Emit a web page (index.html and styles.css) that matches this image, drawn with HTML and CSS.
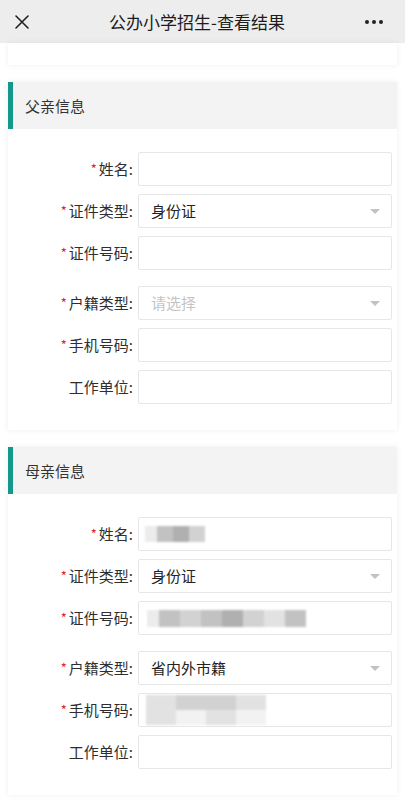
FILE: index.html
```html
<!DOCTYPE html>
<html lang="zh-CN">
<head>
<meta charset="utf-8">
<title>公办小学招生-查看结果</title>
<link rel="stylesheet" href="styles.css">
</head>
<body>
<header class="nav">
  <span class="nav-close">
    <svg width="14" height="14" viewBox="0 0 14 14"><path d="M1 1L13 13M13 1L1 13" stroke="#222" stroke-width="1.6" fill="none" stroke-linecap="round"/></svg>
  </span>
  <h1 class="nav-title">公办小学招生-查看结果</h1>
  <span class="nav-more"><i></i><i></i><i></i></span>
</header>
<main class="page">
  <div class="card card-top"></div>

  <section class="card">
    <div class="card-head">父亲信息</div>
    <div class="form">
      <div class="row"><label class="lbl"><em>*</em>姓名:</label><div class="field"></div></div>
      <div class="row"><label class="lbl"><em>*</em>证件类型:</label><div class="field select">身份证<b class="caret"></b></div></div>
      <div class="row row-wide"><label class="lbl"><em>*</em>证件号码:</label><div class="field"></div></div>
      <div class="row"><label class="lbl"><em>*</em>户籍类型:</label><div class="field select placeholder">请选择<b class="caret"></b></div></div>
      <div class="row"><label class="lbl"><em>*</em>手机号码:</label><div class="field"></div></div>
      <div class="row"><label class="lbl">工作单位:</label><div class="field"></div></div>
    </div>
  </section>

  <section class="card">
    <div class="card-head">母亲信息</div>
    <div class="form">
      <div class="row"><label class="lbl"><em>*</em>姓名:</label><div class="field"><span class="blur blur-name"><i class="g1"></i><i class="g3"></i><i class="g4"></i><i class="g2"></i></span></div></div>
      <div class="row"><label class="lbl"><em>*</em>证件类型:</label><div class="field select">身份证<b class="caret"></b></div></div>
      <div class="row row-wide"><label class="lbl"><em>*</em>证件号码:</label><div class="field"><span class="blur blur-id"><i class="g1"></i><i class="g3"></i><i class="g2"></i><i class="g3"></i><i class="g4"></i><i class="g2"></i><i class="g1"></i><i class="g3"></i></span></div></div>
      <div class="row"><label class="lbl"><em>*</em>户籍类型:</label><div class="field select">省内外市籍<b class="caret"></b></div></div>
      <div class="row"><label class="lbl"><em>*</em>手机号码:</label><div class="field"><span class="blur blur-phone"><span class="bl-row"><i class="g1"></i><i class="g2"></i><i class="g2"></i><i class="g1"></i></span><span class="bl-row"><i class="g1"></i><i class="g0"></i><i class="g1"></i><i class="g0"></i></span></span></div></div>
      <div class="row"><label class="lbl">工作单位:</label><div class="field"></div></div>
    </div>
  </section>
</main>
</body>
</html>
```

FILE: styles.css
```css
html, body {
  margin: 0;
  padding: 0;
  background: #ffffff;
  font-family: "Noto Sans CJK SC", "Noto Sans", sans-serif;
  color: #333;
}

.nav {
  height: 43px;
  background: #ededed;
  display: flex;
  align-items: center;
  justify-content: space-between;
  padding: 0 22px 0 15px;
}
.nav-close {
  display: flex;
  width: 14px;
  height: 14px;
}
.nav-title {
  margin: 0;
  font-size: 17px;
  font-weight: 400;
  color: #1c1c1c;
  line-height: 43px;
}
.nav-more {
  display: flex;
  gap: 3px;
  width: 18px;
}
.nav-more i {
  width: 4px;
  height: 4px;
  border-radius: 50%;
  background: #222;
}

.page {
  padding: 0 8px 20px;
}

.card {
  background: #fff;
  box-shadow: 0 0 6px rgba(0, 0, 0, 0.07);
  margin-top: 17px;
}
.card-top {
  margin-top: 0;
  height: 22px;
}

.card-head {
  height: 47px;
  line-height: 47px;
  background: #f3f3f3;
  border-left: 5px solid #14988a;
  padding-left: 12px;
  font-size: 15px;
  color: #333;
}

.form {
  padding: 23px 5px 26px 0;
}
.row {
  display: grid;
  grid-template-columns: 125px 1fr;
  column-gap: 5px;
  height: 34px;
  margin-bottom: 8px;
}
.row:last-child {
  margin-bottom: 0;
}
.row-wide {
  margin-bottom: 16px;
}
.lbl {
  text-align: right;
  font-size: 15px;
  line-height: 34px;
  color: #2e2e2e;
  white-space: nowrap;
}
.lbl em {
  font-style: normal;
  color: #e0262e;
  font-size: 13px;
  margin-right: 2px;
  vertical-align: 1px;
}
.field {
  position: relative;
  border: 1px solid #e6e6e6;
  border-radius: 2px;
  box-sizing: border-box;
  height: 34px;
  padding-left: 12px;
  font-size: 15px;
  line-height: 32px;
  color: #222;
  display: flex;
  align-items: center;
}
.field.placeholder {
  color: #c4c4c4;
}
.caret {
  position: absolute;
  right: 11px;
  top: 14px;
  width: 0;
  height: 0;
  border-left: 5px solid transparent;
  border-right: 5px solid transparent;
  border-top: 5px solid #c2c2c2;
}

.blur {
  display: flex;
  filter: blur(1.2px);
}
.blur i {
  display: block;
}
.blur .g0 { background: #f2f2f2; }
.blur .g1 { background: #e2e2e2; }
.blur .g2 { background: #d2d2d2; }
.blur .g3 { background: #c2c2c2; }
.blur .g4 { background: #b0b0b0; }

.blur-name {
  margin-left: -6px;
  height: 16px;
}
.blur-name i { width: 16px; height: 16px; }
.blur-name .g1 { width: 12px; background: #ececec; }

.blur-id {
  margin-left: -4px;
  height: 17px;
}
.blur-id i { width: 21px; height: 17px; }
.blur-id i:first-child { width: 12px; background: #ececec; }

.blur-phone {
  flex-direction: column;
  margin-left: -5px;
}
.bl-row {
  display: flex;
}
.bl-row i { width: 30px; height: 15px; }
```
